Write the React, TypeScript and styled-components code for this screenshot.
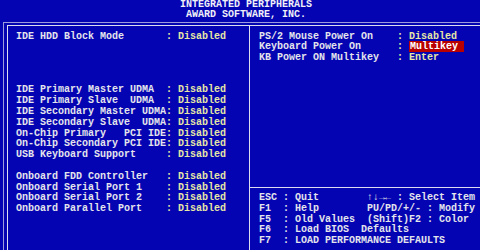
import { ReactElement } from 'react';
import styled, { createGlobalStyle } from 'styled-components';

const blue = '#0404b2';
const text = '#e4e4ec';
const value = '#e6e6a6';
const pale = '#9c9cdc';
const line = '#dcdcf0';

const GlobalStyle = createGlobalStyle`
  *, *::before, *::after {
    box-sizing: border-box;
  }
  html, body {
    margin: 0;
    padding: 0;
    background: ${blue};
  }
`;

const Screen = styled.div`
  display: flex;
  flex-direction: column;
  width: 480px;
  height: 250px;
  overflow: hidden;
  background: ${blue};
  color: ${text};
  font-family: 'Liberation Mono', 'DejaVu Sans Mono', monospace;
  font-weight: bold;
  font-size: 10px;
  white-space: pre;
`;

const Header = styled.div`
  padding-bottom: 2px;
  padding-left: 12px;
  text-align: center;
  line-height: 10px;
  color: #f0f0f8;
`;

const Frame = styled.div`
  flex: 1;
  display: flex;
  margin-left: 3px;
  padding: 2px 0 0 3px;
  border-top: 1px solid ${pale};
  border-left: 1px solid ${pale};
`;

const Inner = styled.div`
  flex: 1;
  display: grid;
  grid-template-columns: 241px 1fr;
  border-top: 1px solid ${line};
  border-left: 1px solid ${line};
`;

const LeftPanel = styled.div`
  padding: 5.5px 0 0 8px;
`;

const RightPanel = styled.div`
  display: flex;
  flex-direction: column;
  border-left: 1px solid ${line};
`;

const Settings = styled.div`
  flex: 0 0 161px;
  padding: 5.5px 0 0 9px;
`;

const Help = styled.div`
  flex: 1;
  padding: 5px 0 0 9px;
  border-top: 1px solid ${line};
`;

const Line = styled.div`
  height: 10.8px;
  line-height: 10.8px;
`;

const Value = styled.span<{ $selected?: boolean }>`
  color: ${(p) => (p.$selected ? '#ffffff' : value)};
  background: ${(p) => (p.$selected ? '#b80000' : 'transparent')};
  padding-left: ${(p) => (p.$selected ? '1px' : '0')};
  padding-right: ${(p) => (p.$selected ? '6px' : '0')};
`;

type Item = { label: string; value: string; selected?: boolean } | null;

const leftItems: Item[] = [
  { label: 'IDE HDD Block Mode', value: 'Disabled' },
  null,
  null,
  null,
  null,
  { label: 'IDE Primary Master UDMA', value: 'Disabled' },
  { label: 'IDE Primary Slave  UDMA', value: 'Disabled' },
  { label: 'IDE Secondary Master UDMA', value: 'Disabled' },
  { label: 'IDE Secondary Slave  UDMA', value: 'Disabled' },
  { label: 'On-Chip Primary   PCI IDE', value: 'Disabled' },
  { label: 'On-Chip Secondary PCI IDE', value: 'Disabled' },
  { label: 'USB Keyboard Support', value: 'Disabled' },
  null,
  { label: 'Onboard FDD Controller', value: 'Disabled' },
  { label: 'Onboard Serial Port 1', value: 'Disabled' },
  { label: 'Onboard Serial Port 2', value: 'Disabled' },
  { label: 'Onboard Parallel Port', value: 'Disabled' },
];

const rightItems: Item[] = [
  { label: 'PS/2 Mouse Power On', value: 'Disabled' },
  { label: 'Keyboard Power On', value: 'Multikey', selected: true },
  { label: 'KB Power ON Multikey', value: 'Enter' },
];

const helpLines = [
  'ESC : Quit        \u2191\u2193\u2192\u2190 : Select Item',
  'F1  : Help        PU/PD/+/- : Modify',
  'F5  : Old Values  (Shift)F2 : Color',
  'F6  : Load BIOS  Defaults',
  'F7  : LOAD PERFORMANCE DEFAULTS',
];

function SettingRow({ item, width }: { item: Item; width: number }): ReactElement {
  if (!item) return <Line> </Line>;
  return (
    <Line>
      {item.label.padEnd(width, ' ')}
      <Value>: </Value>
      <Value $selected={item.selected}>{item.value}</Value>
    </Line>
  );
}

function App(): ReactElement {
  return (
    <>
      <GlobalStyle />
      <Screen>
        <Header>
          <div>INTEGRATED PERIPHERALS</div>
          <div>AWARD SOFTWARE, INC.</div>
        </Header>
        <Frame>
          <Inner>
            <LeftPanel>
              {leftItems.map((item, i) => (
                <SettingRow key={i} item={item} width={25} />
              ))}
            </LeftPanel>
            <RightPanel>
              <Settings>
                {rightItems.map((item, i) => (
                  <SettingRow key={i} item={item} width={23} />
                ))}
              </Settings>
              <Help>
                {helpLines.map((l) => (
                  <Line key={l}>{l}</Line>
                ))}
              </Help>
            </RightPanel>
          </Inner>
        </Frame>
      </Screen>
    </>
  );
}

export default App;
